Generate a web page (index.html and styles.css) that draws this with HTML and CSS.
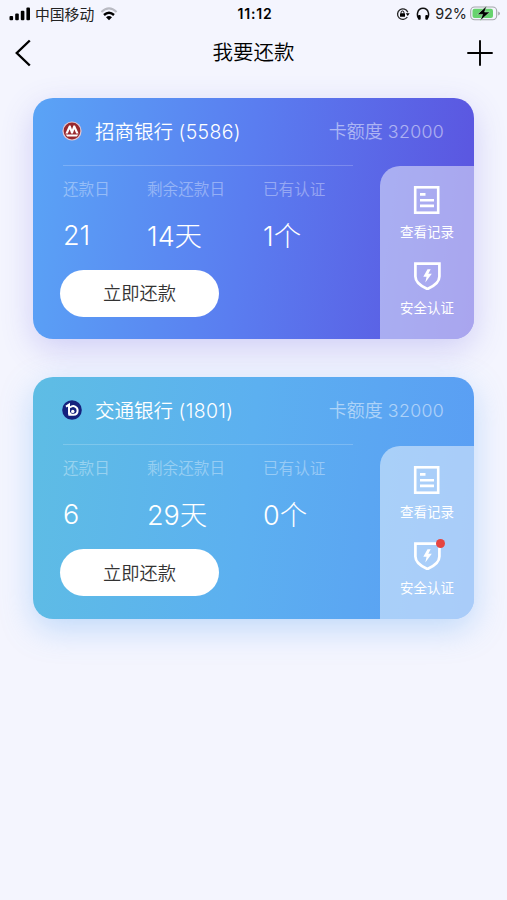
FILE: index.html
```html
<!DOCTYPE html>
<html lang="zh-CN">

<head>
  <meta charset="UTF-8">
  <meta name="viewport" content="width=device-width, initial-scale=1.0">
  <title>我要还款</title>
  <link rel="stylesheet" href="styles.css">
</head>

<body>
  <div class="status-bar">
    <div class="status-left">
      <svg width="22" height="14" viewBox="0 0 22 14">
        <rect x="0.5" y="9" width="3.6" height="4.3" rx="1" />
        <rect x="6.2" y="6.6" width="3.6" height="6.7" rx="1" />
        <rect x="11.8" y="3.8" width="3.6" height="9.5" rx="1" />
        <rect x="17.4" y="0.6" width="3.6" height="12.7" rx="1" />
      </svg>
      <span class="carrier">中国移动</span>
      <svg class="wifi" width="18" height="14" viewBox="0 0 18 14">
        <path d="M1.4 4.9Q9-2.1 16.6 4.9" fill="none" stroke="#b9bac2" stroke-width="2" />
        <path d="M4 8Q9 3.4 14 8" fill="none" stroke="#000" stroke-width="2.4" />
        <path d="M9 13.2L6 10.2Q9 7.8 12 10.2Z" />
      </svg>
    </div>
    <div class="time">11:12</div>
    <div class="status-right">
      <svg width="14" height="14" viewBox="0 0 14 14">
        <path d="M11.3 10A5.3 5.3 0 1 1 11.8 5.2" fill="none" stroke="#222" stroke-width="1.3" />
        <path d="M9.8 6.2H13.7L11.7 9Z" />
        <rect x="4" y="6.2" width="5" height="3.6" rx="0.5" />
        <path d="M5.1 6.5V5.4a1.4 1.4 0 0 1 2.8 0V6.5" fill="none" stroke="#000" stroke-width="1" />
      </svg>
      <svg class="headphones" width="14" height="14" viewBox="0 0 14 14">
        <path d="M2.6 11.3C.6 8.8.8 1.3 7 1.3S13.4 8.8 11.4 11.3" fill="none" stroke="#111" stroke-width="1.5" />
        <rect x="2" y="7.9" width="2.7" height="4.9" rx="1" />
        <rect x="9.3" y="7.9" width="2.7" height="4.9" rx="1" />
      </svg>
      <span class="percent">92%</span>
      <svg width="31" height="16" viewBox="0 0 31 16">
        <rect x="0.7" y="1" width="26" height="12.8" rx="4" fill="none" stroke="#a5a7ab" stroke-width="1.1" />
        <path d="M28.2 5.4v4q1.7-.5 1.7-2t-1.7-2z" fill="#a5a7ab" />
        <rect x="2.5" y="2.8" width="20.5" height="9.2" rx="2" fill="#67d36e" />
        <path d="M16.6 0L7.4 8.4H12.6L10.3 14.6L19.9 6H14.6Z" stroke="#c9efcf" stroke-width="0.5" />
      </svg>
    </div>
  </div>

  <div class="nav">
    <svg width="18" height="28" viewBox="0 0 18 28">
      <path d="M15.8 1.5L2.8 14L15.8 26.5" fill="none" stroke="#000" stroke-width="2.4" />
    </svg>
    <h1>我要还款</h1>
    <svg width="26" height="26" viewBox="0 0 26 26">
      <path d="M13 0.3V25.7M0.3 13H25.7" stroke="#000" stroke-width="1.9" />
    </svg>
  </div>

  <div class="cards">
    <div class="card card-cmb">
      <div class="card-header">
        <svg class="logo" width="20" height="20" viewBox="0 0 20 20">
          <circle cx="10" cy="10" r="9.6" fill="#e3c9d3" />
          <circle cx="10" cy="10" r="8.4" fill="#98282e" />
          <path d="M3.4 12.6L7 4.6H8.6L10 8.4L11.4 4.6H13L16.6 12.6H14.2L12.3 8.2L10.9 12.6H9.1L7.7 8.2L5.8 12.6Z" fill="#fff" />
          <path d="M3.6 13.4H16.4L14.8 15.6H5.2Z" fill="#fff" />
        </svg>
        <span class="bank">招商银行 <b>(5586)</b></span>
        <span class="limit">卡额度 <b>32000</b></span>
      </div>
      <div class="card-body">
        <div class="info">
          <div class="stats">
            <div class="stat"><label>还款日</label><p>21</p></div>
            <div class="stat"><label>剩余还款日</label><p>14<i>天</i></p></div>
            <div class="stat"><label>已有认证</label><p>1<i>个</i></p></div>
          </div>
          <button class="pay">立即还款</button>
        </div>
        <div class="side">
          <div class="action">
            <svg width="28" height="28" viewBox="0 0 28 28">
              <rect x="2.2" y="1.3" width="23" height="25.4" fill="none" stroke="#fff" stroke-width="2.6" />
              <path d="M7 8.4H12.5M7 14.2H21M7 19.9H21" stroke="#fff" stroke-width="2.6" />
            </svg>
            <span>查看记录</span>
          </div>
          <div class="action">
            <svg width="28" height="28" viewBox="0 0 28 28">
              <path d="M2.4 1.7H26.4V14.5C26.4 20 20.8 24.2 14.4 27C8 24.2 2.4 20 2.4 14.5Z" fill="none" stroke="#fff" stroke-width="2.7" />
              <path d="M14.5 7.3L10.3 14.7H13.6L12.3 20.6L18.8 11.8H15.3L17.7 7.3Z" fill="#fff" />
            </svg>
            <span>安全认证</span>
          </div>
        </div>
      </div>
    </div>

    <div class="card card-bocom">
      <div class="card-header">
        <svg class="logo" width="20" height="20" viewBox="0 0 20 20">
          <circle cx="10" cy="10" r="9.8" fill="#15217d" />
          <path d="M4 6.6L7 4.6V13.6H9.4" fill="none" stroke="#fff" stroke-width="2" />
          <path d="M8 7.4C11.4 4.6 15.8 6.8 15.6 10.8C15.5 13.2 14 14.8 11.6 14.8H6.4" fill="none" stroke="#fff" stroke-width="2" />
          <circle cx="10.8" cy="11.4" r="1.7" fill="#fff" />
        </svg>
        <span class="bank">交通银行 <b>(1801)</b></span>
        <span class="limit">卡额度 <b>32000</b></span>
      </div>
      <div class="card-body">
        <div class="info">
          <div class="stats">
            <div class="stat"><label>还款日</label><p>6</p></div>
            <div class="stat"><label>剩余还款日</label><p>29<i>天</i></p></div>
            <div class="stat"><label>已有认证</label><p>0<i>个</i></p></div>
          </div>
          <button class="pay">立即还款</button>
        </div>
        <div class="side">
          <div class="action">
            <svg width="28" height="28" viewBox="0 0 28 28">
              <rect x="2.2" y="1.3" width="23" height="25.4" fill="none" stroke="#fff" stroke-width="2.6" />
              <path d="M7 8.4H12.5M7 14.2H21M7 19.9H21" stroke="#fff" stroke-width="2.6" />
            </svg>
            <span>查看记录</span>
          </div>
          <div class="action">
            <svg width="28" height="28" viewBox="0 0 28 28">
              <path d="M2.4 1.7H26.4V14.5C26.4 20 20.8 24.2 14.4 27C8 24.2 2.4 20 2.4 14.5Z" fill="none" stroke="#fff" stroke-width="2.7" />
              <path d="M14.5 7.3L10.3 14.7H13.6L12.3 20.6L18.8 11.8H15.3L17.7 7.3Z" fill="#fff" />
            </svg>
            <div class="dot"></div>
            <span>安全认证</span>
          </div>
        </div>
      </div>
    </div>
  </div>
</body>

</html>
```
FILE: styles.css
```css
* {
  box-sizing: border-box;
}

body {
  font-family: Inter, 'Noto Sans CJK SC', sans-serif;
  background: #f4f5fe;
  margin: 0;
  height: 100vh;
  overflow: hidden;
}

svg {
  display: block;
  flex-shrink: 0;
}

/* Status bar */
.status-bar {
  display: flex;
  align-items: center;
  height: 27px;
  padding: 0 6px 0 9px;
  line-height: 27px;
}

.status-left,
.status-right {
  flex: 1;
  display: flex;
  align-items: center;
}

.status-right {
  justify-content: flex-end;
}

.carrier {
  font-size: 14.8px;
  line-height: 24px;
  margin: 2px 0 0 4px;
  color: #222;
}

.wifi {
  margin-left: 6px;
}

.time {
  font-size: 14px;
  font-weight: 600;
  letter-spacing: 0.8px;
}

.headphones {
  margin-left: 6px;
}

.percent {
  font-size: 14.4px;
  margin: 0 3px 0 5px;
  color: #222;
}

/* Title bar */
.nav {
  display: flex;
  justify-content: space-between;
  align-items: center;
  height: 53px;
  padding: 0 14px 1px 14px;
}

.nav h1 {
  font-size: 20.5px;
  font-weight: 350;
  line-height: 30px;
  margin: 0 0 0 8px;
  color: #000;
}

/* Cards */
.cards {
  display: flex;
  flex-direction: column;
  gap: 38px;
  padding: 17.5px 33px 0 33px;
}

.card {
  display: flex;
  flex-direction: column;
  height: 241.7px;
  border-radius: 20px;
  color: #fff;
}

.card-cmb {
  background: linear-gradient(97deg, #5aa4f6 0%, #5a7df0 48%, #5b53df 100%);
  box-shadow: 0 10px 32px rgba(91, 83, 223, 0.24);
}

.card-bocom {
  background: linear-gradient(97deg, #5ebde4 0%, #5cb0f0 48%, #5a9df4 100%);
  box-shadow: 0 10px 32px rgba(90, 165, 244, 0.34);
}

.card-header {
  display: flex;
  align-items: center;
  height: 68.5px;
  padding: 0 30px 3px 29px;
}

.logo {
  position: relative;
  top: 0.5px;
}

.bank {
  font-size: 19.5px;
  font-weight: 350;
  margin-left: 13px;
  white-space: nowrap;
}

.bank b {
  font-size: 19.4px;
  font-weight: 300;
  letter-spacing: 0.4px;
}

.limit {
  font-size: 18px;
  font-weight: 350;
  margin-left: auto;
  padding-bottom: 1px;
  white-space: nowrap;
  opacity: 0.5;
}

.limit b {
  font-size: 17.8px;
  font-weight: 300;
  letter-spacing: 0.3px;
}

.card-body {
  flex: 1;
  display: flex;
}

.info {
  flex: 1;
  padding-left: 27px;
}

.stats {
  display: flex;
  width: 290px;
  height: 105px;
  margin: -1.5px 0 0 3px;
  border-top: 1px solid rgba(255, 255, 255, 0.2);
  padding-top: 12px;
}

.stat {
  flex: 0 0 84px;
}

.stat + .stat {
  flex-basis: 116px;
}

.stat:last-child {
  flex-basis: 90px;
}

.stat label {
  display: block;
  font-size: 15.6px;
  font-weight: 350;
  line-height: 24px;
  white-space: nowrap;
  opacity: 0.36;
}

.stat p {
  margin: 15px 0 0;
  font-size: 27px;
  font-weight: 300;
  line-height: 38px;
  white-space: nowrap;
}

.stat i {
  font-size: 27.5px;
  font-style: normal;
}

.pay {
  display: block;
  width: 159px;
  height: 47px;
  border: none;
  border-radius: 24px;
  padding: 0 0 2px;
  background: #fff;
  color: #333;
  font-family: inherit;
  font-size: 18.3px;
  font-weight: 350;
}

.side {
  width: 94px;
  padding-top: 20px;
  border-radius: 20px 0 20px 0;
  background: rgba(255, 255, 255, 0.48);
}

.action {
  position: relative;
  display: flex;
  flex-direction: column;
  align-items: center;
  height: 76px;
}

.action span {
  margin-top: 8px;
  font-size: 13.5px;
  font-weight: 400;
  line-height: 20px;
}

.dot {
  position: absolute;
  top: -3px;
  left: 55.5px;
  width: 9px;
  height: 9px;
  border-radius: 50%;
  background: #e64540;
}
```
